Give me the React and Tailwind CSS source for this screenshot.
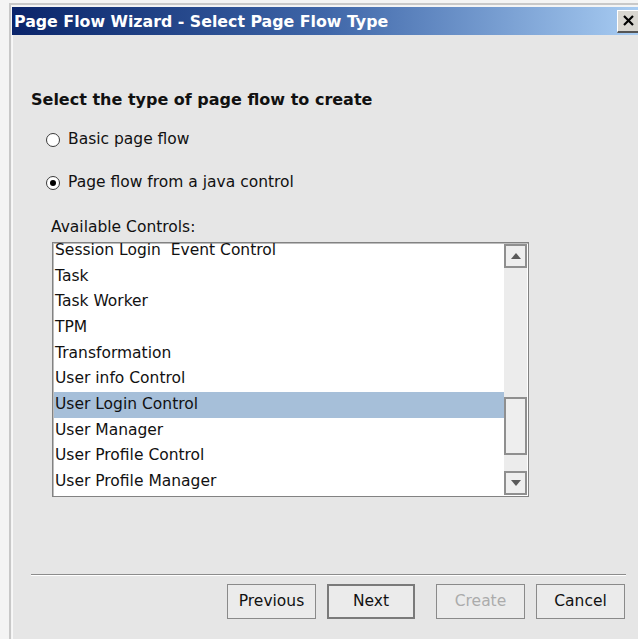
import React from 'react';

const controls = [
  'Session Login\u00a0 Event Control',
  'Task',
  'Task Worker',
  'TPM',
  'Transformation',
  'User info Control',
  'User Login Control',
  'User Manager',
  'User Profile Control',
  'User Profile Manager',
];

function Radio({ checked, label }) {
  return (
    <div className="flex items-center h-[20px] gap-[8px]">
      <span className="w-[14px] h-[14px] rounded-full border border-[#3a3a3a] bg-white flex items-center justify-center">
        {checked && <span className="w-[6px] h-[6px] rounded-full bg-black" />}
      </span>
      <span>{label}</span>
    </div>
  );
}

function Arrow({ up }) {
  return (
    <div className="h-[24px] border-2 border-[#8f8f8f] bg-[#eeeeee] flex items-center justify-center">
      <svg width="10" height="6" viewBox="0 0 10 6">
        {up ? <path d="M0 6 L5 0 L10 6 Z" fill="#5a5a5a" /> : <path d="M0 0 L5 6 L10 0 Z" fill="#5a5a5a" />}
      </svg>
    </div>
  );
}

function Button({ children, primary, disabled, className = '' }) {
  return (
    <button
      className={
        'h-[35px] bg-[#ebebeb] flex items-center justify-center ' +
        (primary ? 'w-[88px] border-2 border-[#7a7a7a] ' : 'w-[89px] border border-[#8a8a8a] ') +
        (disabled ? 'text-[#ababab] ' : 'text-[#111] ') +
        className
      }
    >
      {children}
    </button>
  );
}

export default function App() {
  return (
    <div className="w-[638px] h-[639px] overflow-hidden bg-[#f4f4f4] pl-[9px] pt-[3px] font-['DejaVu_Sans',Verdana,sans-serif] text-[15.5px] text-[#111]">
      <div className="h-full border-l-2 border-t-2 border-[#c8c8c8] pl-[1px] pt-[2px] flex flex-col">
        {/* title bar */}
        <div className="h-[28px] shrink-0 bg-gradient-to-r from-[#0a246a] via-[#3f66a8] to-[#a8ccf2] flex items-center justify-between pl-[2px]">
          <span className="text-white font-bold text-[15.8px] pt-[1px]">Page Flow Wizard - Select Page Flow Type</span>
          <div className="w-[24px] h-[23px] -mr-[3px] bg-[#d8d6d0] border-r-2 border-b-2 border-[#555] border-l border-t border-l-white border-t-white flex items-center justify-center">
            <svg width="11" height="11" viewBox="0 0 11 11">
              <path d="M1 1 L10 10 M10 1 L1 10" stroke="#000" strokeWidth="2.2" />
            </svg>
          </div>
        </div>

        {/* body */}
        <div className="flex-1 bg-[#e6e6e6] border-l border-[#f8f8f8] flex flex-col pl-[18px] pr-[12px]">
          <h1 className="mt-[56px] h-[18px] leading-[18px] font-bold text-[16px] text-[#111]">Select the type of page flow to create</h1>

          <div className="ml-[15px] mt-[21px] flex flex-col gap-[23px]">
            <Radio label="Basic page flow" />
            <Radio checked label="Page flow from a java control" />
          </div>

          <div className="ml-[20px] mt-[25px] h-[18px] leading-[18px]">Available Controls:</div>

          <div className="ml-[21px] mt-[6px] w-[477px] h-[255px] border border-[#828282] shadow-[inset_1px_1px_0_#bdbdbd] bg-white flex">
            <div className="flex-1 overflow-hidden pl-[1px] pt-[1px]">
              <div className="-mt-[6px]">
                {controls.map(c => (
                  <div
                    key={c}
                    className={'h-[25.67px] leading-[25.67px] pl-[1px] whitespace-pre ' + (c === 'User Login Control' ? 'bg-[#a6bfd9]' : '')}
                  >
                    {c}
                  </div>
                ))}
              </div>
            </div>
            {/* scrollbar */}
            <div className="w-[23px] my-[1px] mr-[1px] bg-[#ececec] flex flex-col">
              <Arrow up />
              <div className="flex-1">
                <div className="mt-[129px] h-[58px] border-2 border-[#8f8f8f] bg-[#eeeeee]" />
              </div>
              <Arrow />
            </div>
          </div>

          <div className="mt-[77px] h-[2px] border-t border-[#8c8c8c] border-b border-b-white" />

          <div className="mt-[8px] flex justify-end gap-[11px] pr-[1px]">
            <Button>Previous</Button>
            <Button primary>Next</Button>
            <Button disabled className="ml-[10px]">Create</Button>
            <Button>Cancel</Button>
          </div>
        </div>
      </div>
    </div>
  );
}
